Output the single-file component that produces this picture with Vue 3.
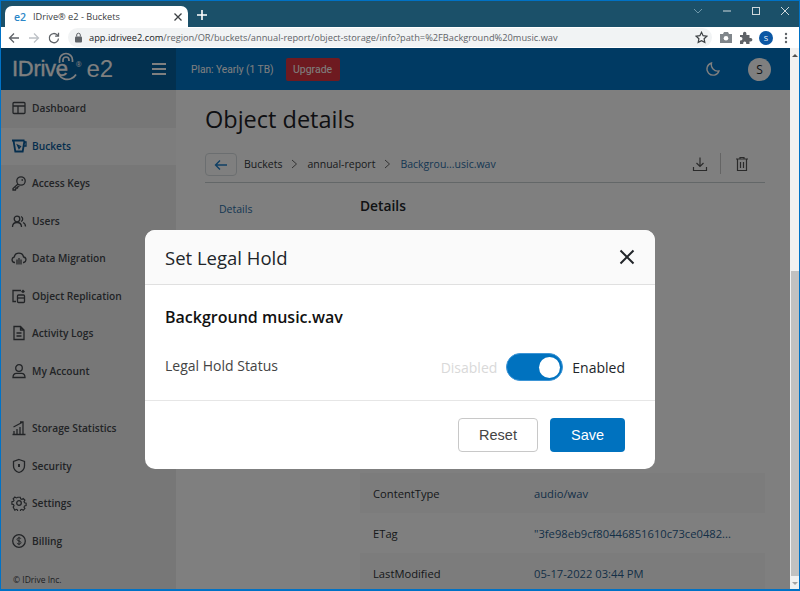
<template>
  <div class="window">
    <div class="tabstrip">
      <div class="tab">
        <span class="favicon">e2</span>
        <span class="tab-title">IDrive® e2 - Buckets</span>
        <svg class="tab-close" width="10" height="10" viewBox="0 0 10 10"><path d="M1.500 1.500l7 7M8.500 1.500l-7 7" /></svg>
      </div>
      <svg class="new-tab" width="12" height="12" viewBox="0 0 12 12"><path d="M6 1v10M1 6h10" /></svg>
      <div class="window-controls">
        <svg width="10" height="10" viewBox="0 0 10 10"><path d="M1 3l4 4 4-4" /></svg>
        <svg width="10" height="10" viewBox="0 0 10 10"><path d="M1 5h8" /></svg>
        <svg width="10" height="10" viewBox="0 0 10 10"><rect x="1.500" y="1.500" width="7" height="7" /></svg>
        <svg width="10" height="10" viewBox="0 0 10 10"><path d="M1 1l8 8M9 1l-8 8" /></svg>
      </div>
    </div>

    <div class="toolbar">
      <svg class="nav-icon" width="14" height="14" viewBox="0 0 14 14"><path d="M12 7H2.500M7 2.500L2.500 7 7 11.500" /></svg>
      <svg class="nav-icon faded" width="14" height="14" viewBox="0 0 14 14"><path d="M2 7h9.500M7 2.500L11.500 7 7 11.500" /></svg>
      <svg class="nav-icon" width="14" height="14" viewBox="0 0 14 14"><path d="M11.500 7.500a4.600 4.600 0 1 1-1.300-3.600L11.500 5.200M11.500 1.800v3.400H8.100" /></svg>
      <div class="omnibox">
        <svg width="9" height="11" viewBox="0 0 9 11"><rect x="1" y="4.500" width="7" height="6" rx="1" fill="#5f6368" /><path d="M2.700 4.500V3a1.800 1.800 0 0 1 3.600 0v1.500" fill="none" stroke="#5f6368" /></svg>
        <span class="url"><b>app.idrivee2.com</b>/region/OR/buckets/annual-report/object-storage/info?path=%2FBackground%20music.wav</span>
        <svg class="star" width="13" height="13" viewBox="0 0 13 13"><path d="M6.500 1.300l1.600 3.400 3.700.5-2.700 2.500.7 3.700-3.300-1.800-3.300 1.800.7-3.700L1.200 5.200l3.700-.5z" /></svg>
      </div>
      <svg class="tool-icon camera" width="14" height="13" viewBox="0 0 14 13"><path fill="#80868b" d="M1 3h3l1-2h4l1 2h3v9H1z" /><circle cx="7" cy="7.200" r="2.300" fill="#fff" /></svg>
      <svg class="tool-icon" width="14" height="14" viewBox="0 0 14 14"><path fill="#5f6368" d="M1 4h3V2.500a1.700 1.700 0 0 1 3.400 0V4h3.100v3h1.200a1.700 1.700 0 0 1 0 3.400h-1.200V13H7.200v-1a1.500 1.500 0 0 0-3 0v1H1V9.500h.8a1.700 1.700 0 0 0 0-3.400H1z" /></svg>
      <span class="profile">S</span>
      <svg class="tool-icon dots" width="4" height="12" viewBox="0 0 4 12"><circle cx="2" cy="2" r="1.200" fill="#5f6368" /><circle cx="2" cy="6" r="1.200" fill="#5f6368" /><circle cx="2" cy="10" r="1.200" fill="#5f6368" /></svg>
    </div>

    <div class="viewport">
      <div class="app">
        <header class="app-header">
          <div class="brand">
            <span class="logo-word">IDrive</span>
            <svg class="logo-lock" width="26" height="32" viewBox="0 0 26 32"><path d="M3.500 11V8a6.500 6.500 0 0 1 13 0v2M7 10V8a3 3 0 0 1 6 0v1M20 22.500A10 10 0 0 1 1.500 16" /></svg>
            <span class="logo-reg">®</span>
            <span class="logo-e2">e2</span>
            <span class="burger"><i></i><i></i><i></i></span>
          </div>
          <div class="header-main">
            <span class="plan">Plan: Yearly (1 TB)</span>
            <span class="upgrade">Upgrade</span>
            <svg class="moon" width="16" height="16" viewBox="0 0 16 16"><path d="M6.500 2a6.200 6.200 0 1 0 7.500 8A6.500 6.500 0 0 1 6.500 2z" /></svg>
            <span class="avatar">S</span>
          </div>
        </header>

        <div class="app-body">
          <nav class="sidebar">
            <div class="nav-group">
              <a v-for="item in mainNav" :key="item.label" class="nav-item" :class="{ active: item.active }">
                <svg width="16" height="16" viewBox="0 0 16 16" v-html="item.icon"></svg>
                <span>{{ item.label }}</span>
              </a>
            </div>
            <div class="nav-group second">
              <a v-for="item in lowerNav" :key="item.label" class="nav-item">
                <svg width="16" height="16" viewBox="0 0 16 16" v-html="item.icon"></svg>
                <span>{{ item.label }}</span>
              </a>
            </div>
            <div class="copyright">© IDrive Inc.</div>
          </nav>

          <main class="content">
            <h1>Object details</h1>
            <div class="crumbs">
              <button class="back">
                <svg width="14" height="12" viewBox="0 0 14 12"><path d="M13 6H1.500M6 1.500L1.500 6 6 10.500" /></svg>
              </button>
              <span>Buckets</span>
              <svg class="chev" width="7" height="10" viewBox="0 0 7 10"><path d="M1 1l4.500 4L1 9" /></svg>
              <span>annual-report</span>
              <svg class="chev" width="7" height="10" viewBox="0 0 7 10"><path d="M1 1l4.500 4L1 9" /></svg>
              <span class="current">Backgrou...usic.wav</span>
              <div class="crumb-actions">
                <svg width="16" height="16" viewBox="0 0 16 16"><path d="M8 1.500v9M4.500 7L8 10.500 11.500 7M1.500 11v3.500h13V11" /></svg>
                <i class="divider"></i>
                <svg width="14" height="16" viewBox="0 0 14 16"><path d="M1 3h12M5 3V1.500h4V3M2.500 3v11.500h9V3M5.500 6v6M8.500 6v6" /></svg>
              </div>
            </div>
            <div class="detail-layout">
              <aside class="detail-tabs">Details</aside>
              <section class="detail-panel">
                <h2>Details</h2>
                <div class="rows">
                  <div class="rows-behind"></div>
                  <div v-for="row in rows" :key="row.name" class="row">
                    <span class="row-name">{{ row.name }}</span>
                    <span class="row-value">{{ row.value }}</span>
                  </div>
                </div>
              </section>
            </div>
          </main>
        </div>
      </div>

      <div class="scrollbar">
        <i class="arrow up"></i>
        <div class="thumb"></div>
        <i class="arrow down"></i>
      </div>

      <div class="overlay">
        <div class="modal">
          <div class="modal-head">
            <span>Set Legal Hold</span>
            <svg width="16" height="16" viewBox="0 0 16 16"><path d="M1.500 1.500l13 13M14.500 1.500l-13 13" /></svg>
          </div>
          <div class="modal-body">
            <div class="file-name">Background music.wav</div>
            <div class="status-row">
              <span class="status-label">Legal Hold Status</span>
              <div class="switch-wrap">
                <span class="off">Disabled</span>
                <span class="switch"><i></i></span>
                <span class="on">Enabled</span>
              </div>
            </div>
          </div>
          <div class="modal-foot">
            <button class="btn reset">Reset</button>
            <button class="btn save">Save</button>
          </div>
        </div>
      </div>
    </div>
  </div>
</template>

<script setup>
const mainNav = [
  { label: "Dashboard", icon: '<rect x="2" y="2.500" width="12" height="11" rx="1"/><path d="M2 6h12M7 6v7.500"/>' },
  { label: "Buckets", active: true, icon: '<path d="M1 2.500h12.500M2.500 2.500l1.800 11h7.400l1.800-11" stroke-width="1.800"/><path d="M13.500 4h1.500v4h-2M6.500 7l3 1.500-1.500 2z"/>' },
  { label: "Access Keys", icon: '<circle cx="10" cy="6" r="4.200"/><path d="M7 9l-5 4.500V15h2.500l.5-2h1.500l.5-1.500 1.500-.5M10.500 5h1.500"/>' },
  { label: "Users", icon: '<circle cx="6" cy="6" r="2.800"/><path d="M1.500 14c0-6 9-6 9 0M10 3.500a2.700 2.700 0 0 1 0 5M12 9.500c1.500.6 2.500 2.200 2.500 4"/>' },
  { label: "Data Migration", icon: '<path d="M4 12.500H3.500a2.800 2.800 0 0 1-.3-5.500 4.800 4.800 0 0 1 9.400 0 2.800 2.800 0 0 1 .2 5.500H12M6 9.500v5M8 8v6.500M10 9.500v5"/>' },
  { label: "Object Replication", icon: '<path d="M5 13.500H2V2.500h8M12 5V2.500M13.500 4L12 2.500 10.500 4"/><rect x="6.500" y="7" width="7" height="7.500" rx="1"/><path d="M6.500 10h7"/>' },
  { label: "Activity Logs", icon: '<path d="M3 1.500h6.500L13 5v9.500H3zM9.500 1.500V5H13M5.500 8h5M5.500 11h5"/>' },
  { label: "My Account", icon: '<circle cx="8" cy="5" r="3.300"/><path d="M2 14.500c0-2.500 1.500-4.200 3.500-4.200h5c2 0 3.500 1.700 3.500 4.200z"/>' }
];

const lowerNav = [
  { label: "Storage Statistics", icon: '<path d="M1.500 14.500h13M3 14v-3M6 14V9M9 14V7M12 14V5M2.500 7L11 2.500M9 2h3v3"/>' },
  { label: "Security", icon: '<path d="M8 1.500l5.500 2v4.500c0 3.500-2.500 5.500-5.500 6.500-3-1-5.500-3-5.500-6.500V3.500z"/><path d="M8 6v3" stroke-width="2"/>' },
  { label: "Settings", icon: '<circle cx="8" cy="8" r="2.300"/><path d="M6.600 1.500h2.800l.4 1.800 1.300.6 1.600-1 1.900 1.900-1 1.600.6 1.300 1.800.4v2.800l-1.800.4-.6 1.300 1 1.600-1.900 1.900-1.600-1-1.300.6-.4 1.800H6.600l-.4-1.800-1.300-.6-1.600 1L1.400 12.600l1-1.600-.6-1.300L0 9.300V6.500l1.800-.4.6-1.300-1-1.600 1.900-1.900 1.600 1 1.300-.6z" transform="translate(.9 .9) scale(.89)"/>' },
  { label: "Billing", icon: '<circle cx="8" cy="8" r="6.300"/><path d="M10 5.800C9.500 5 8.800 4.900 8 4.900c-1.200 0-2 .6-2 1.500 0 2 4 1.200 4 3.200 0 1-.9 1.500-2 1.500-.9 0-1.600-.2-2.100-1M8 3.800v8.400" stroke-width="1"/>' }
];

const rows = [
  { name: "ContentType", value: "audio/wav" },
  { name: "ETag", value: '"3fe98eb9cf80446851610c73ce0482...' },
  { name: "LastModified", value: "05-17-2022 03:44 PM" }
];
</script>

<style>
html,
body {
  margin: 0;
  height: 100%;
  overflow: hidden;
}
</style>

<style scoped>
.window {
  width: 800px;
  height: 591px;
  box-sizing: border-box;
  border: 1px solid #0072c6;
  border-bottom-width: 2px;
  display: flex;
  flex-direction: column;
  overflow: hidden;
  font-family: "Open Sans", sans-serif;
  color: #212529;
}

.tabstrip {
  height: 26px;
  flex: none;
  background: #1b5069;
  display: flex;
  align-items: flex-end;
  padding-left: 4px;
}

.tab {
  width: 183px;
  height: 21px;
  background: #fff;
  border-radius: 7px 7px 0 0;
  display: flex;
  align-items: center;
  box-sizing: border-box;
  padding: 0 5px 0 9px;
  font-size: 9.2px;
  color: #3c4043;
}

.favicon {
  color: #2b87c8;
  font-weight: 600;
  font-size: 10.5px;
  width: 19px;
}

.tab-title {
  flex: 1;
  white-space: nowrap;
}

.tab-close path {
  stroke: #3c4043;
  stroke-width: 1.3;
  fill: none;
}

.new-tab {
  margin: 0 0 6px 8px;
}

.new-tab path {
  stroke: #fff;
  stroke-width: 1.600;
}

.window-controls {
  margin-left: auto;
  align-self: flex-start;
  display: flex;
  gap: 19px;
  padding: 5px 9px 0 0;
}

.window-controls svg * {
  fill: none;
  stroke: #cfd8dc;
  stroke-width: 1;
}

.window-controls svg:first-child * {
  stroke: #6d97aa;
}

.toolbar {
  height: 21px;
  flex: none;
  background: #fff;
  display: flex;
  align-items: center;
  padding-left: 6px;
}

.nav-icon {
  margin-right: 6px;
  flex: none;
}

.nav-icon * {
  fill: none;
  stroke: #5f6368;
  stroke-width: 1.3;
}

.nav-icon.faded * {
  stroke: #bdc1c6;
}

.omnibox {
  margin-left: 1px;
  width: 644px;
  height: 19px;
  box-sizing: border-box;
  background: #f1f3f4;
  border-radius: 10px;
  display: flex;
  align-items: center;
  padding: 0 4px 0 6px;
}

.url {
  margin-left: 6px;
  font-size: 9.25px;
  color: #5f6368;
  white-space: nowrap;
  flex: 1;
}

.url b {
  font-weight: 400;
  color: #202124;
}

.star path {
  fill: none;
  stroke: #3c4043;
  stroke-width: 1.2;
}

.tool-icon {
  margin-left: 6px;
  flex: none;
}

.camera {
  margin-left: 7px;
}

.dots {
  margin-left: 11px;
}

.profile {
  margin-left: 6px;
  width: 14px;
  height: 14px;
  flex: none;
  border-radius: 50%;
  background: #0b57a4;
  color: #fff;
  font-size: 8px;
  display: flex;
  align-items: center;
  justify-content: center;
}

.viewport {
  flex: 1;
  min-height: 0;
  position: relative;
  display: flex;
}

.app {
  flex: 1;
  min-width: 0;
  display: flex;
  flex-direction: column;
  background: #fff;
}

.app-header {
  height: 42px;
  flex: none;
  display: flex;
  color: #fff;
}

.brand {
  width: 175px;
  flex: none;
  background: #04609e;
  display: flex;
  align-items: center;
  position: relative;
  padding-left: 11px;
  box-sizing: border-box;
  color: #fff;
}

.logo-word {
  font-family: "Liberation Sans", sans-serif;
  font-size: 22px;
  letter-spacing: -0.3px;
  -webkit-text-stroke: 0.3px #fff;
}

.logo-lock {
  position: absolute;
  left: 55px;
  top: 4px;
}

.logo-lock path {
  fill: none;
  stroke: #fff;
  stroke-width: 1.700;
}

.logo-reg {
  font-size: 7px;
  margin: -10px 0 0 8px;
}

.logo-e2 {
  font-family: "Liberation Sans", sans-serif;
  font-size: 24px;
  margin-left: 5px;
}

.burger {
  margin-left: auto;
  margin-right: 10px;
  width: 14px;
  display: flex;
  flex-direction: column;
  gap: 3px;
}

.burger i {
  height: 2px;
  background: #fff;
}

.header-main {
  flex: 1;
  background: #0074c6;
  display: flex;
  align-items: center;
  padding-left: 15px;
}

.plan {
  font-family: Roboto, sans-serif;
  font-size: 10.2px;
  color: #fff;
}

.upgrade {
  margin-left: 12px;
  width: 54px;
  height: 23px;
  background: #dc3440;
  border-radius: 2px;
  font-family: Roboto, sans-serif;
  font-size: 10.500px;
  color: #fff;
  display: flex;
  align-items: center;
  justify-content: center;
}

.moon {
  margin-left: auto;
}

.moon path {
  fill: none;
  stroke: #fff;
  stroke-width: 1.3;
}

.avatar {
  margin: 0 19px 0 27px;
  width: 23px;
  height: 23px;
  border-radius: 50%;
  background: #fff;
  color: #212529;
  font-size: 12px;
  display: flex;
  align-items: center;
  justify-content: center;
}

.app-body {
  flex: 1;
  min-height: 0;
  display: flex;
}

.sidebar {
  width: 175px;
  flex: none;
  background: #efefef;
  position: relative;
}

.nav-group.second {
  margin-top: 20px;
}

.nav-item {
  height: 37.5px;
  box-sizing: border-box;
  display: flex;
  align-items: center;
  padding: 0 0 1px 10px;
  gap: 5px;
  font-size: 10.2px;
  font-weight: 600;
  color: #44484d;
}

.nav-item svg {
  flex: none;
  fill: none;
  stroke: currentColor;
  stroke-width: 1.3;
}

.nav-item.active {
  background: #fafafa;
  color: #0a5c9c;
}

.copyright {
  position: absolute;
  left: 12px;
  bottom: 4px;
  font-size: 8.5px;
  color: #3d4045;
}

.content {
  flex: 1;
  min-width: 0;
  padding: 0 25px 0 29px;
  overflow: hidden;
}

h1 {
  margin: 13px 0 0;
  font-size: 23.500px;
  font-weight: 500;
  line-height: 33px;
  color: #1d2126;
}

.crumbs {
  margin-top: 17px;
  height: 29px;
  display: flex;
  align-items: flex-start;
  border-bottom: 1px solid #c6ced1;
  font-size: 10.5px;
  color: #33373b;
}

.crumbs > span {
  line-height: 22px;
}

.back {
  width: 32px;
  height: 23px;
  margin-right: 7px;
  padding: 0;
  background: #fff;
  border: 1px solid #d7dde0;
  border-radius: 4px;
  display: flex;
  align-items: center;
  justify-content: center;
}

.back path {
  fill: none;
  stroke: #1f7fc9;
  stroke-width: 1.4;
}

.chev {
  margin: 6px 9px 0;
}

.chev path {
  fill: none;
  stroke: #666;
}

.crumbs .current {
  color: #2b6ea6;
}

.crumb-actions {
  margin-left: auto;
  display: flex;
  align-items: center;
  gap: 12px;
  padding-right: 16px;
}

.crumb-actions svg {
  fill: none;
  stroke: #555;
  stroke-width: 1.2;
}

.divider {
  width: 1px;
  height: 21px;
  margin-right: 2px;
  background: #c8c8c8;
}

.detail-layout {
  display: flex;
}

.detail-tabs {
  width: 155px;
  flex: none;
  padding: 19px 0 0 14px;
  box-sizing: border-box;
  font-size: 10.5px;
  color: #2b6ea6;
}

.detail-panel {
  flex: 1;
}

h2 {
  margin: 14px 0 0;
  font-size: 13.8px;
  line-height: 18px;
  font-weight: 600;
  color: #212529;
}

.rows {
  margin-top: 7px;
}

.rows-behind {
  height: 251px;
}

.row {
  height: 40px;
  display: flex;
  align-items: center;
  padding-left: 13px;
  font-size: 11.2px;
  box-sizing: border-box;
}

.row:nth-child(even) {
  background: #f9f9f9;
}

.row-name {
  width: 161px;
  flex: none;
  color: #2e3236;
}

.row-value {
  color: #2b5f8f;
  white-space: nowrap;
}

.scrollbar {
  width: 9px;
  flex: none;
  background: #f1f1f1;
  display: flex;
  flex-direction: column;
  align-items: center;
}

.thumb {
  width: 8px;
  align-self: flex-end;
  flex: 1;
  margin-top: 214px;
  margin-bottom: 6px;
  background: #c1c1c1;
}

.arrow {
  width: 0;
  height: 0;
  border-left: 3px solid transparent;
  border-right: 3px solid transparent;
}

.arrow.up {
  margin-top: 6px;
  border-bottom: 3px solid #505050;
}

.arrow.down {
  margin-bottom: 4px;
  border-top: 3px solid #a3a3a3;
}

.overlay {
  position: absolute;
  top: 0;
  left: 0;
  right: 9px;
  bottom: 0;
  background: rgba(0, 0, 0, 0.5);
  padding: 182px 0 0 144px;
  box-sizing: border-box;
}

.modal {
  width: 510px;
  background: #fff;
  border-radius: 10px;
  overflow: hidden;
}

.modal-head {
  height: 55px;
  box-sizing: border-box;
  background: #fafafa;
  border-bottom: 1px solid #e0e0e0;
  display: flex;
  align-items: center;
  justify-content: space-between;
  padding: 0 20px;
  font-size: 18.500px;
  color: #212529;
}

.modal-head svg path {
  fill: none;
  stroke: #212529;
  stroke-width: 2;
}

.modal-body {
  height: 116px;
  box-sizing: border-box;
  padding: 20px 30px 0 20px;
  border-bottom: 1px solid #e6e6e6;
}

.file-name {
  font-size: 16px;
  font-weight: 600;
  line-height: 24px;
  color: #111;
}

.status-row {
  margin-top: 24px;
  display: flex;
  align-items: center;
  justify-content: space-between;
}

.status-label {
  font-size: 14px;
  color: #444;
  margin-top: -4px;
}

.switch-wrap {
  display: flex;
  align-items: center;
  font-size: 14px;
}

.off {
  color: #d9d9d9;
}

.on {
  color: #212529;
}

.switch {
  width: 57px;
  height: 28px;
  margin: 0 9px;
  box-sizing: border-box;
  border-radius: 14px;
  background: #0072bf;
  border: 1px solid #3d95d6;
  display: flex;
  align-items: center;
  justify-content: flex-end;
  padding-right: 2px;
}

.switch i {
  width: 21px;
  height: 21px;
  border-radius: 50%;
  background: #fff;
}

.modal-foot {
  height: 68px;
  box-sizing: border-box;
  padding: 17px 30px 0 0;
  display: flex;
  justify-content: flex-end;
  align-items: flex-start;
  gap: 12px;
}

.btn {
  height: 34px;
  border-radius: 4px;
  font-family: "Liberation Sans", sans-serif;
  font-size: 14.500px;
}

.reset {
  width: 80px;
  background: #fff;
  border: 1px solid #c8c8c8;
  color: #444;
}

.save {
  width: 75px;
  background: #0072bf;
  border: 0;
  color: #fff;
}
</style>
